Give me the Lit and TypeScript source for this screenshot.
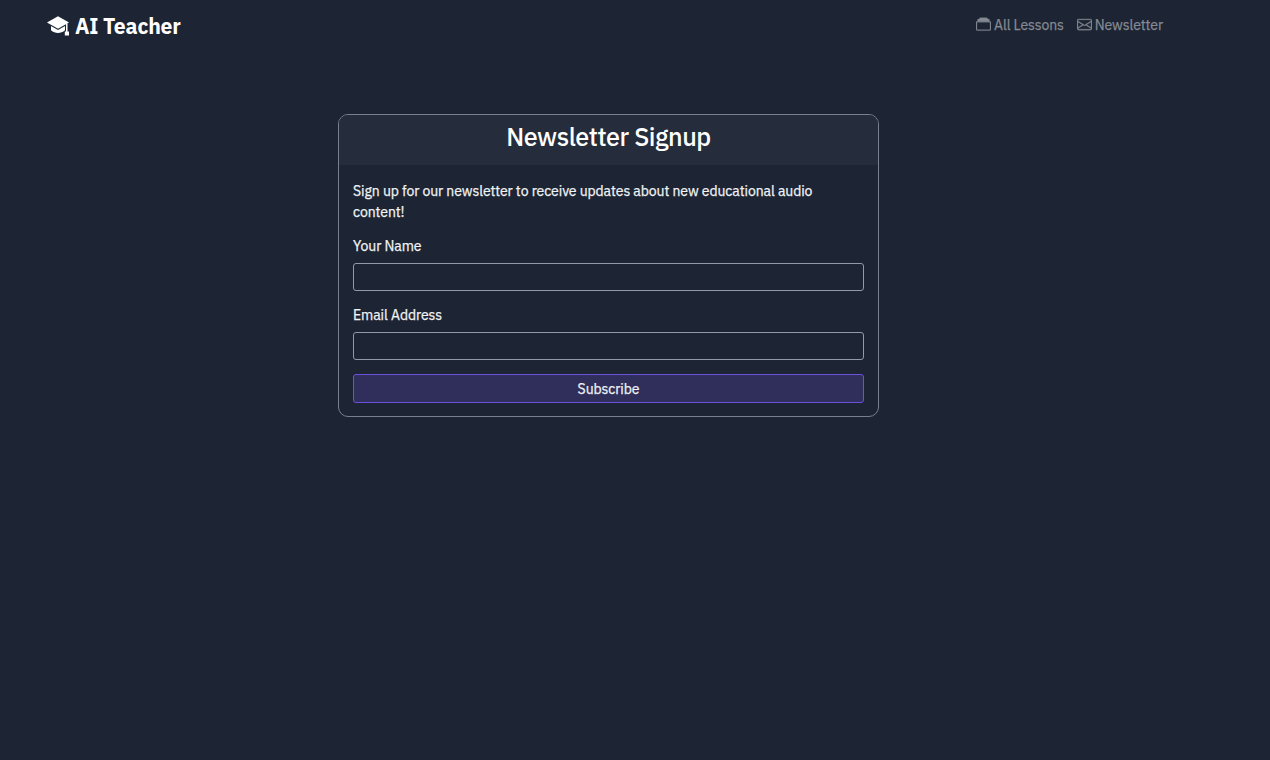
import { LitElement, html, svg, css } from "lit";
import { customElement, property } from "lit/decorators.js";

const capIcon = svg`
  <path d="M11 .3 22 6.600 11 12.800 0 6.600z" />
  <path d="M4 10 11 14 18 10V14.300C16 16 13.500 17 11 17S6 16 4 14.300z" />
  <path d="M19 8 20.500 7.300V15.400H22V19.600H17.800V15.400H19z" />
`;

const collectionIcon = svg`
  <path d="M4.500.700h7a.8.800 0 0 1 .8.800v.6h1.200a.8.800 0 0 1 .8.800v1.600H1.700V2.900a.8.800 0 0 1 .8-.8h1.200v-.6a.8.800 0 0 1 .8-.8z" />
  <path d="M0 13a1.500 1.500 0 0 0 1.500 1.500h13A1.500 1.500 0 0 0 16 13V6a1.500 1.500 0 0 0-1.500-1.500h-13A1.500 1.500 0 0 0 0 6zm1.500.5A.5.500 0 0 1 1 13V6a.5.500 0 0 1 .5-.5h13a.5.500 0 0 1 .5.500v7a.5.500 0 0 1-.5.500z" />
`;

const envelopeIcon = svg`
  <path d="M0 4a2 2 0 0 1 2-2h12a2 2 0 0 1 2 2v8a2 2 0 0 1-2 2H2a2 2 0 0 1-2-2zm2-1a1 1 0 0 0-1 1v.217l7 4.200 7-4.200V4a1 1 0 0 0-1-1zm13 2.383-4.708 2.825L15 11.105zm-.034 6.876-5.640-3.471L8 9.583l-1.326-.795-5.640 3.470A1 1 0 0 0 2 13h12a1 1 0 0 0 .966-.741M1 11.105l4.708-2.897L1 5.383z" />
`;

@customElement("site-header")
class SiteHeader extends LitElement {
  render() {
    return html`
      <header>
        <a class="brand" href="#/">
          <svg class="cap" viewBox="0 0 22 20">${capIcon}</svg>
          <span class="name">AI Teacher</span>
        </a>
        <nav>
          <a href="#/lessons">
            <svg class="icon" viewBox="0 0 16 16">${collectionIcon}</svg>
            <span>All Lessons</span>
          </a>
          <a href="#/newsletter">
            <svg class="icon" viewBox="0 0 16 16">${envelopeIcon}</svg>
            <span>Newsletter</span>
          </a>
        </nav>
      </header>
    `;
  }

  static styles = css`
    :host { display: block; }
    header {
      display: flex;
      align-items: center;
      justify-content: space-between;
      height: 52px;
      padding: 0 54px 0 47px;
    }
    a {
      display: flex;
      align-items: center;
      text-decoration: none;
      white-space: nowrap;
    }
    svg { fill: currentColor; flex: none; }
    .brand { color: #fff; gap: 6px; }
    .cap { width: 22px; height: 20px; }
    .name {
      font-size: 21.2px;
      font-weight: 700;
      line-height: 30px;
      letter-spacing: -0.2px;
      -webkit-text-stroke: 0;
    }
    nav { display: flex; gap: 13px; margin-top: -2px; }
    nav a {
      color: #858a93;
      gap: 3px;
    }
    .icon {
      width: 15px;
      height: 15px;
      margin-top: -1px;
      stroke: currentColor;
      stroke-width: 0.3;
    }
  `;
}

@customElement("text-field")
class TextField extends LitElement {
  @property() label = "";
  @property() type = "text";

  render() {
    return html`
      <label for="field">${this.label}</label>
      <input id="field" type=${this.type} />
    `;
  }

  static styles = css`
    :host { display: block; margin-bottom: 14px; }
    label {
      display: block;
      line-height: 21px;
      margin-bottom: 6px;
    }
    input {
      display: block;
      box-sizing: border-box;
      width: 100%;
      height: 28px;
      padding: 4px 8px;
      border: 1px solid #909aa9;
      border-radius: 3px;
      background: transparent;
      color: #fff;
      font: inherit;
      outline: none;
    }
  `;
}

@customElement("newsletter-card")
class NewsletterCard extends LitElement {
  render() {
    return html`
      <section>
        <h2>Newsletter Signup</h2>
        <form @submit=${(e: Event) => e.preventDefault()}>
          <p>
            Sign up for our newsletter to receive updates about new educational
            audio content!
          </p>
          <text-field label="Your Name"></text-field>
          <text-field label="Email Address" type="email"></text-field>
          <button>Subscribe</button>
        </form>
      </section>
    `;
  }

  static styles = css`
    :host { display: block; width: 541px; }
    section {
      border: 1px solid #778090;
      border-radius: 10px;
      overflow: hidden;
    }
    h2 {
      box-sizing: border-box;
      height: 50px;
      margin: 0;
      padding-top: 7px;
      background: #252c3b;
      color: #fff;
      font-size: 25.2px;
      font-weight: 500;
      line-height: 30px;
      letter-spacing: -0.47px;
      text-align: center;
      -webkit-text-stroke: 0;
    }
    form { padding: 16px 14px 13px; }
    p { margin: 0 0 13px; line-height: 21px; }
    button {
      display: block;
      box-sizing: border-box;
      width: 100%;
      height: 29px;
      padding: 0;
      border: 1px solid #6c50dc;
      border-radius: 3px;
      background: #302f5c;
      color: inherit;
      font: inherit;
      letter-spacing: inherit;
    }
  `;
}

@customElement("app-root")
class AppRoot extends LitElement {
  render() {
    return html`
      <div class="page">
        <site-header></site-header>
        <main><newsletter-card></newsletter-card></main>
      </div>
    `;
  }

  static styles = css`
    :host {
      display: block;
      min-height: 100vh;
      background: #1d2433;
      color: #f1f3f5;
      font-family: "IBM Plex Sans", "Liberation Sans", sans-serif;
      font-size: 14px;
      letter-spacing: -0.08px;
      -webkit-text-stroke: 0.25px;
    }
    .page { width: 1217px; }
    main {
      display: flex;
      justify-content: center;
      padding-top: 62px;
    }
  `;
}
